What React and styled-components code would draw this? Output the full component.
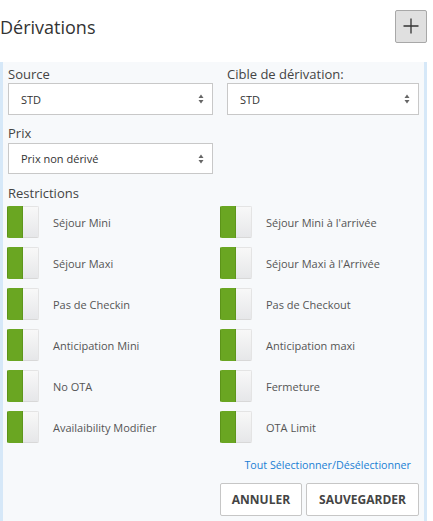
import React from "react";
import styled, { createGlobalStyle } from "styled-components";

const Global = createGlobalStyle`
  html, body { margin: 0; padding: 0; background: #fff; }
  body { font-family: "Open Sans", "Noto Sans", sans-serif; color: #333; }
  * { box-sizing: border-box; }
`;

const Header = styled.div`
  height: 62px;
  width: 427px;
  display: flex;
  align-items: center;
  justify-content: space-between;
`;

const Title = styled.h2`
  margin: 0;
  font-size: 18px;
  font-weight: 400;
  color: #333;
  margin-top: -8px;
`;

const AddButton = styled.button`
  width: 32px;
  height: 33px;
  margin-top: -10px;
  background: #e0e0e0;
  border: 1px solid #a8a8a8;
  border-radius: 2px;
  display: flex;
  align-items: center;
  justify-content: center;
  padding: 0;
`;

const Panel = styled.div`
  width: 427px;
  min-height: 459px;
  background: #f7f9fb;
  border-left: 3px solid #d6e8f8;
  border-right: 3px solid #d6e8f8;
  padding: 3px 5px 5px 5px;
`;

const SelectGrid = styled.div`
  display: grid;
  grid-template-columns: 205px 192px;
  column-gap: 14px;
`;

const Field = styled.div`
  display: flex;
  flex-direction: column;
  margin-bottom: ${(p) => p.$mb || 0}px;
`;

const Label = styled.div`
  font-size: 13px;
  line-height: 18px;
  color: #444;
  margin-bottom: ${(p) => p.$mb ?? 0}px;
`;

const SelectBox = styled.div`
  height: ${(p) => p.$h || 32}px;
  background: #fff;
  border: 1px solid #c8c8c8;
  display: flex;
  align-items: center;
  justify-content: space-between;
  padding: 0 8px 0 12px;
  font-size: 11px;
  color: #333;
`;

const Arrows = () => (
  <svg width="6" height="10" viewBox="0 0 6 10">
    <path d="M3 0.5 L5.5 4 L0.5 4 Z" fill="#666" />
    <path d="M3 9.5 L5.5 6 L0.5 6 Z" fill="#666" />
  </svg>
);

const Select = ({ value, h }) => (
  <SelectBox $h={h}>
    <span>{value}</span>
    <Arrows />
  </SelectBox>
);

const ToggleGrid = styled.div`
  display: grid;
  grid-template-columns: 213px 1fr;
  row-gap: 9px;
  margin-left: -1px;
  margin-top: 4px;
`;

const ToggleRow = styled.div`
  display: flex;
  align-items: center;
  height: 32px;
`;

const Toggle = styled.div`
  width: 32px;
  height: 32px;
  display: flex;
  border-radius: 2px;
  overflow: hidden;
  flex-shrink: 0;
`;

const ToggleOn = styled.div`
  width: 16px;
  background: #6aa622;
  border-left: 1px solid #5c9419;
  border-right: 1px solid #5e961c;
`;

const ToggleOff = styled.div`
  width: 16px;
  background: linear-gradient(#f8f8f8, #e6e7e9);
  border-top: 1px solid #e4e4e4;
  border-right: 1px solid #e4e4e4;
  border-bottom: 1px solid #d8d8d8;
`;

const ToggleText = styled.span`
  margin-left: 14px;
  font-size: 11px;
  color: #555;
`;

const LinkRow = styled.div`
  display: flex;
  justify-content: flex-end;
  margin-top: 14px;
  padding-right: 8px;
`;

const Link = styled.a`
  font-size: 10.7px;
  line-height: 16px;
  color: #1a7fd4;
  text-decoration: none;
`;

const Actions = styled.div`
  display: flex;
  justify-content: flex-end;
  gap: 4px;
  margin-top: 10px;
`;

const Btn = styled.button`
  height: 33px;
  padding: 0 ${(p) => p.$px}px;
  background: #fff;
  border: 1px solid #c6c6c6;
  border-radius: 2px;
  font-family: "Open Sans", sans-serif;
  font-weight: 700;
  font-size: 12px;
  color: #444;
`;

const restrictions = [
  ["Séjour Mini", "Séjour Mini à l'arrivée"],
  ["Séjour Maxi", "Séjour Maxi à l'Arrivée"],
  ["Pas de Checkin", "Pas de Checkout"],
  ["Anticipation Mini", "Anticipation maxi"],
  ["No OTA", "Fermeture"],
  ["Availaibility Modifier", "OTA Limit"],
];

export default function App() {
  return (
    <>
      <Global />
      <Header>
        <Title>Dérivations</Title>
        <AddButton>
          <svg width="16" height="16" viewBox="0 0 16 16">
            <path d="M8 0.5 V15.5 M0.5 8 H15.5" stroke="#333" strokeWidth="1.3" />
          </svg>
        </AddButton>
      </Header>
      <Panel>
        <SelectGrid>
          <Field $mb={9}>
            <Label>Source</Label>
            <Select value="STD" />
          </Field>
          <Field $mb={9}>
            <Label>Cible de dérivation:</Label>
            <Select value="STD" />
          </Field>
          <Field $mb={10}>
            <Label $mb={1}>Prix</Label>
            <Select value="Prix non dérivé" h={31} />
          </Field>
        </SelectGrid>
        <Label>Restrictions</Label>
        <ToggleGrid>
          {restrictions.flat().map((r) => (
            <ToggleRow key={r}>
              <Toggle>
                <ToggleOn />
                <ToggleOff />
              </Toggle>
              <ToggleText>{r}</ToggleText>
            </ToggleRow>
          ))}
        </ToggleGrid>
        <LinkRow>
          <Link href="#">Tout Sélectionner/Désélectionner</Link>
        </LinkRow>
        <Actions>
          <Btn $px={11}>ANNULER</Btn>
          <Btn $px={12}>SAUVEGARDER</Btn>
        </Actions>
      </Panel>
    </>
  );
}
